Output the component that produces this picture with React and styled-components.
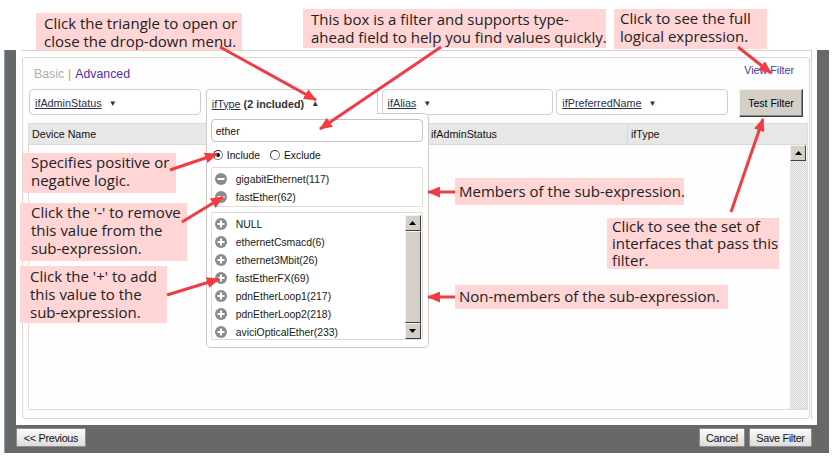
import React from "react";
import styled, { createGlobalStyle } from "styled-components";

const GlobalStyle = createGlobalStyle`
  html, body {
    margin: 0;
    padding: 0;
    background: #ffffff;
  }
  * {
    box-sizing: border-box;
  }
`;

const UI_FONT = `"Liberation Sans", Arial, sans-serif`;
const NOTE_FONT = `"Open Sans", "Noto Sans", sans-serif`;

// page + frame
const Stage = styled.div`
  position: relative;
  width: 839px;
  height: 464px;
  overflow: hidden;
  font-family: ${UI_FONT};
  color: #1c1c1c;
`;

const TopNotes = styled.div`
  display: flex;
  align-items: flex-start;
  height: 50px;
  padding-left: 36px;
`;

const Note = styled.div`
  background: #ffd5d5;
  font-family: ${NOTE_FONT};
  font-size: 15px;
  line-height: ${(p) => p.$lh || 18}px;
  color: #222;
  white-space: nowrap;
  width: ${(p) => p.$w}px;
  height: ${(p) => p.$h}px;
  padding: ${(p) => p.$pad || "0 0 0 8px"};
  margin: ${(p) => p.$m || "0"};
`;

const FloatNote = styled(Note)`
  position: absolute;
  z-index: 8;
  left: ${(p) => p.$x}px;
  top: ${(p) => p.$y}px;
`;

const Frame = styled.div`
  margin-left: 4px;
  width: 825px;
  height: 403px;
  border-left: 1px solid #8a9cbc;
  background: repeating-conic-gradient(#6d6d6d 0 25%, #636363 0 50%) 0 0 / 2px 2px;
  padding: 0 12px 0 11px;
  display: flex;
  flex-direction: column;
`;

const Panel = styled.div`
  height: 375px;
  background: #ffffff;
  padding: 0 5px 6px 5px;
  display: flex;
  flex-direction: column;
`;

const OuterBox = styled.div`
  flex: 1;
  border-top: 1px solid #d9d1cd;
  border-right: 1px solid #d9d1cd;
  padding: 6px 1px 0 1px;
  display: flex;
  flex-direction: column;
`;

const InnerBox = styled.div`
  flex: 1;
  border: 1px solid #ddd5d1;
  border-radius: 3px;
  background: #fdfdfd;
  padding: 0 1px 8px 5px;
  display: flex;
  flex-direction: column;
`;

const TopRow = styled.div`
  height: 31px;
  display: flex;
  justify-content: space-between;
  align-items: flex-start;
`;

const ModeTabs = styled.div`
  margin: 9px 0 0 6px;
  font-size: 12.3px;
  line-height: 14px;
`;

const Mode = styled.span`
  color: ${(p) => (p.$active ? "#5b2d9e" : "#b5ada6")};
`;

const Bar = styled.span`
  color: #e39a1c;
  margin: 0 4px;
`;

const ViewFilter = styled.span`
  margin: 6px 14px 0 0;
  font-size: 10.7px;
  line-height: 13px;
  color: #4a3a9e;
`;

const FilterRow = styled.div`
  height: 28px;
  display: flex;
  align-items: flex-start;
  padding: 0 5px 0 1px;
`;

const FilterBox = styled.div`
  position: relative;
  z-index: ${(p) => (p.$open ? 5 : 1)};
  width: ${(p) => p.$w}px;
  height: 26px;
  margin-left: ${(p) => p.$gap || 0}px;
  background: #fff;
  border: 1px solid #d6cdc9;
  border-bottom: ${(p) => (p.$open ? "none" : "1px solid #d6cdc9")};
  border-radius: ${(p) => (p.$open ? "4px 4px 0 0" : "4px")};
  padding: 2px 0 0 5px;
  display: flex;
  align-items: center;
  font-size: 10.8px;
  color: #2b2f48;
`;

const FieldName = styled.span`
  text-decoration: underline;
`;

const Count = styled.span`
  font-weight: bold;
  margin-left: 3px;
  color: #333;
`;

const Caret = styled.span`
  font-size: 8px;
  margin-left: 7px;
  color: #333;
`;

const Button3D = styled.button`
  font-family: ${UI_FONT};
  font-size: 10.5px;
  color: #000;
  background: #d4d0c8;
  border: 1px solid;
  border-color: #f4f2ee #404040 #404040 #f4f2ee;
  box-shadow: inset -1px -1px 0 #888;
  padding: 0;
  width: ${(p) => p.$w}px;
  height: ${(p) => p.$h}px;
  margin-left: ${(p) => p.$gap || 0}px;
`;

// dropdown
const Dropdown = styled.div`
  position: absolute;
  top: 23px;
  left: -1px;
  width: 223px;
  height: 235px;
  background: #fff;
  border: 1px solid #d3cac6;
  border-radius: 0 5px 5px 5px;
  padding: 5px 5px 7px 4px;
  display: flex;
  flex-direction: column;
  &::before {
    content: "";
    position: absolute;
    top: -1px;
    left: 0;
    width: 170px;
    height: 2px;
    background: #fff;
  }
`;

const Search = styled.div`
  height: 23px;
  border: 1px solid #c9c1bd;
  border-radius: 4px;
  padding-left: 4px;
  display: flex;
  align-items: center;
  font-size: 10.5px;
  color: #111;
`;

const RadioRow = styled.div`
  height: 20px;
  margin-top: 3px;
  display: flex;
  align-items: center;
  padding-left: 2px;
  font-size: 10.3px;
  color: #111;
`;

const Radio = styled.span`
  position: relative;
  width: 10px;
  height: 10px;
  border-radius: 50%;
  border: 1px solid #777;
  border-top-color: #333;
  border-left-color: #333;
  background: #fff;
  margin: 0 4px 0 ${(p) => p.$gap || 0}px;
  &::after {
    content: "";
    display: ${(p) => (p.$on ? "block" : "none")};
    position: absolute;
    left: 2px;
    top: 2px;
    width: 4px;
    height: 4px;
    border-radius: 50%;
    background: #000;
  }
`;

const ValueBox = styled.div`
  height: ${(p) => p.$h}px;
  margin-top: ${(p) => p.$top}px;
  border: 1px solid #e1dbd7;
  border-radius: 2px;
  display: flex;
  overflow: hidden;
`;

const ValueList = styled.div`
  flex: 1;
  padding-top: 2px;
  overflow: hidden;
`;

const ValueRow = styled.div`
  height: 18px;
  display: flex;
  align-items: center;
  gap: 9px;
  padding-left: 3px;
  font-size: 10.4px;
  color: #1a1a1a;
  white-space: nowrap;
`;

const VScroll = styled.div`
  width: 16px;
  margin: 2px 1px 0 0;
  display: flex;
  flex-direction: column;
`;

const ArrowBtn = styled.div`
  width: 16px;
  height: 16px;
  flex: none;
  background: #d4d0c8;
  border: 1px solid;
  border-color: #f4f2ee #404040 #404040 #f4f2ee;
  display: flex;
  align-items: center;
  justify-content: center;
`;

const Thumb = styled.div`
  flex: 1;
  background: #d4d0c8;
  border: 1px solid;
  border-color: #f4f2ee #404040 #404040 #f4f2ee;
`;

const Track = styled.div`
  flex: 1;
  background: repeating-conic-gradient(#cfcfcf 0 25%, #f6f6f6 0 50%) 0 0 / 2px 2px;
`;

// grid
const Grid = styled.div`
  flex: 1;
  margin-top: 6px;
  border: 1px solid #e2dcd8;
  display: flex;
  flex-direction: column;
`;

const GridHead = styled.div`
  height: 21px;
  display: grid;
  grid-template-columns: 399px 200px 1fr;
  background: #e7e7e7;
  border-bottom: 1px solid #d8d8d8;
`;

const HeadCell = styled.div`
  display: flex;
  align-items: center;
  padding-left: 3px;
  font-size: 10.7px;
  color: #111;
  border-right: ${(p) => (p.$last ? "none" : "1px solid #d6d6d6")};
`;

const GridBody = styled.div`
  flex: 1;
  display: flex;
  background: #fdfdfd;
`;

const GridRows = styled.div`
  flex: 1;
`;

const GridScroll = styled.div`
  width: 17px;
  display: flex;
  flex-direction: column;
`;

// footer
const Footer = styled.div`
  height: 28px;
  display: flex;
  align-items: flex-start;
  justify-content: space-between;
  padding: 3px 5px 0 0;
`;

const FooterGroup = styled.div`
  display: flex;
  gap: 4px;
`;

const FooterBtn = styled.button`
  height: 19px;
  width: ${(p) => p.$w}px;
  padding: 0;
  font-family: ${UI_FONT};
  font-size: 10.8px;
  letter-spacing: -0.3px;
  color: #111;
  background: linear-gradient(#fbfbfb, #dcdcdc);
  border: 1px solid #8e8e8e;
  border-radius: 1px;
`;

const ArrowLayer = styled.svg`
  position: absolute;
  left: 0;
  top: 0;
  z-index: 9;
  pointer-events: none;
`;

function Tri({ down }) {
  return (
    <svg width="7" height="4" viewBox="0 0 7 4">
      <path d={down ? "M0 0 H7 L3.5 4 Z" : "M0 4 H7 L3.5 0 Z"} fill="#000" />
    </svg>
  );
}

function ToggleIcon({ plus }) {
  return (
    <svg width="12" height="12" viewBox="0 0 12 12">
      <circle cx="6" cy="6" r="6" fill="#8b8b8b" />
      <rect x="2.5" y="5" width="7" height="2" fill="#fff" />
      {plus && <rect x="5" y="2.5" width="2" height="7" fill="#fff" />}
    </svg>
  );
}

const members = ["gigabitEthernet(117)", "fastEther(62)"];
const others = [
  "NULL",
  "ethernetCsmacd(6)",
  "ethernet3Mbit(26)",
  "fastEtherFX(69)",
  "pdnEtherLoop1(217)",
  "pdnEtherLoop2(218)",
  "aviciOpticalEther(233)",
];

const arrows = [
  [220, 47, 316, 100],
  [441, 47, 320, 129],
  [738, 47, 771, 73],
  [731, 212, 763, 119],
  [170, 170, 217, 154],
  [182, 222, 223, 197],
  [167, 295, 219, 279],
  [455, 192, 428, 192],
  [455, 297, 428, 297],
];

function App() {
  return (
    <Stage>
      <GlobalStyle />
      <TopNotes>
        <Note $w={206} $h={37} $m="13px 0 0 0" $pad="1px 0 0 8px">
          Click the triangle to open or
          <br />
          close the drop-down menu.
        </Note>
        <Note $w={303} $h={39} $m="9px 0 0 61px" $pad="1px 0 0 8px">
          This box is a filter and supports type-
          <br />
          ahead field to help you find values quickly.
        </Note>
        <Note $w={153} $h={40} $m="9px 0 0 8px" $pad="1px 0 0 6px" $lh={17.5}>
          Click to see the full
          <br />
          logical expression.
        </Note>
      </TopNotes>

      <Frame>
        <Panel>
          <OuterBox>
            <InnerBox>
              <TopRow>
                <ModeTabs>
                  <Mode>Basic</Mode>
                  <Bar>|</Bar>
                  <Mode $active>Advanced</Mode>
                </ModeTabs>
                <ViewFilter>View Filter</ViewFilter>
              </TopRow>

              <FilterRow>
                <FilterBox $w={172}>
                  <FieldName>ifAdminStatus</FieldName>
                  <Caret>▼</Caret>
                </FilterBox>
                <FilterBox $w={172} $gap={5} $open>
                  <FieldName>ifType</FieldName>
                  <Count>(2 included)</Count>
                  <Caret>▲</Caret>
                  <Dropdown>
                    <Search>ether</Search>
                    <RadioRow>
                      <Radio $on />
                      Include
                      <Radio $gap={10} />
                      Exclude
                    </RadioRow>
                    <ValueBox $h={40} $top={2}>
                      <ValueList>
                        {members.map((m) => (
                          <ValueRow key={m}>
                            <ToggleIcon />
                            {m}
                          </ValueRow>
                        ))}
                      </ValueList>
                    </ValueBox>
                    <ValueBox $h={128} $top={5}>
                      <ValueList>
                        {others.map((m) => (
                          <ValueRow key={m}>
                            <ToggleIcon plus />
                            {m}
                          </ValueRow>
                        ))}
                      </ValueList>
                      <VScroll>
                        <ArrowBtn>
                          <Tri />
                        </ArrowBtn>
                        <Thumb />
                        <ArrowBtn>
                          <Tri down />
                        </ArrowBtn>
                      </VScroll>
                    </ValueBox>
                  </Dropdown>
                </FilterBox>
                <FilterBox $w={172} $gap={4}>
                  <FieldName>ifAlias</FieldName>
                  <Caret>▼</Caret>
                </FilterBox>
                <FilterBox $w={172} $gap={3}>
                  <FieldName>ifPreferredName</FieldName>
                  <Caret>▼</Caret>
                </FilterBox>
                <Button3D $w={64} $h={28} $gap={11}>
                  Test Filter
                </Button3D>
              </FilterRow>

              <Grid>
                <GridHead>
                  <HeadCell>Device Name</HeadCell>
                  <HeadCell>ifAdminStatus</HeadCell>
                  <HeadCell $last>ifType</HeadCell>
                </GridHead>
                <GridBody>
                  <GridRows />
                  <GridScroll>
                    <ArrowBtn>
                      <Tri />
                    </ArrowBtn>
                    <Track />
                  </GridScroll>
                </GridBody>
              </Grid>
            </InnerBox>
          </OuterBox>
        </Panel>
        <Footer>
          <FooterBtn $w={70}>&lt;&lt; Previous</FooterBtn>
          <FooterGroup>
            <FooterBtn $w={46}>Cancel</FooterBtn>
            <FooterBtn $w={63}>Save Filter</FooterBtn>
          </FooterGroup>
        </Footer>
      </Frame>

      <FloatNote $x={23} $y={153} $w={153} $h={40}>
        Specifies positive or
        <br />
        negative logic.
      </FloatNote>
      <FloatNote $x={20} $y={203} $w={167} $h={58} $pad="0 0 0 11px">
        Click the '-' to remove
        <br />
        this value from the
        <br />
        sub-expression.
      </FloatNote>
      <FloatNote $x={20} $y={266} $w={147} $h={57} $pad="1px 0 0 10px">
        Click the '+' to add
        <br />
        this value to the
        <br />
        sub-expression.
      </FloatNote>
      <FloatNote $x={455} $y={178} $w={229} $h={27} $pad="4px 0 0 4px">
        Members of the sub-expression.
      </FloatNote>
      <FloatNote $x={607} $y={218} $w={172} $h={51} $pad="0 0 0 5px" $lh={17}>
        Click to see the set of
        <br />
        interfaces that pass this
        <br />
        filter.
      </FloatNote>
      <FloatNote $x={455} $y={285} $w={273} $h={24} $pad="2px 0 0 4px">
        Non-members of the sub-expression.
      </FloatNote>

      <ArrowLayer width="839" height="464" viewBox="0 0 839 464">
        <defs>
          <marker
            id="head"
            markerUnits="userSpaceOnUse"
            markerWidth="13"
            markerHeight="11"
            refX="12"
            refY="5.5"
            orient="auto"
          >
            <path d="M0 0 L13 5.5 L0 11 Z" fill="#ef3d43" />
          </marker>
        </defs>
        {arrows.map(([x1, y1, x2, y2], i) => (
          <line
            key={i}
            x1={x1}
            y1={y1}
            x2={x2}
            y2={y2}
            stroke="#ef3d43"
            strokeWidth="3"
            markerEnd="url(#head)"
          />
        ))}
      </ArrowLayer>
    </Stage>
  );
}

export default App;
